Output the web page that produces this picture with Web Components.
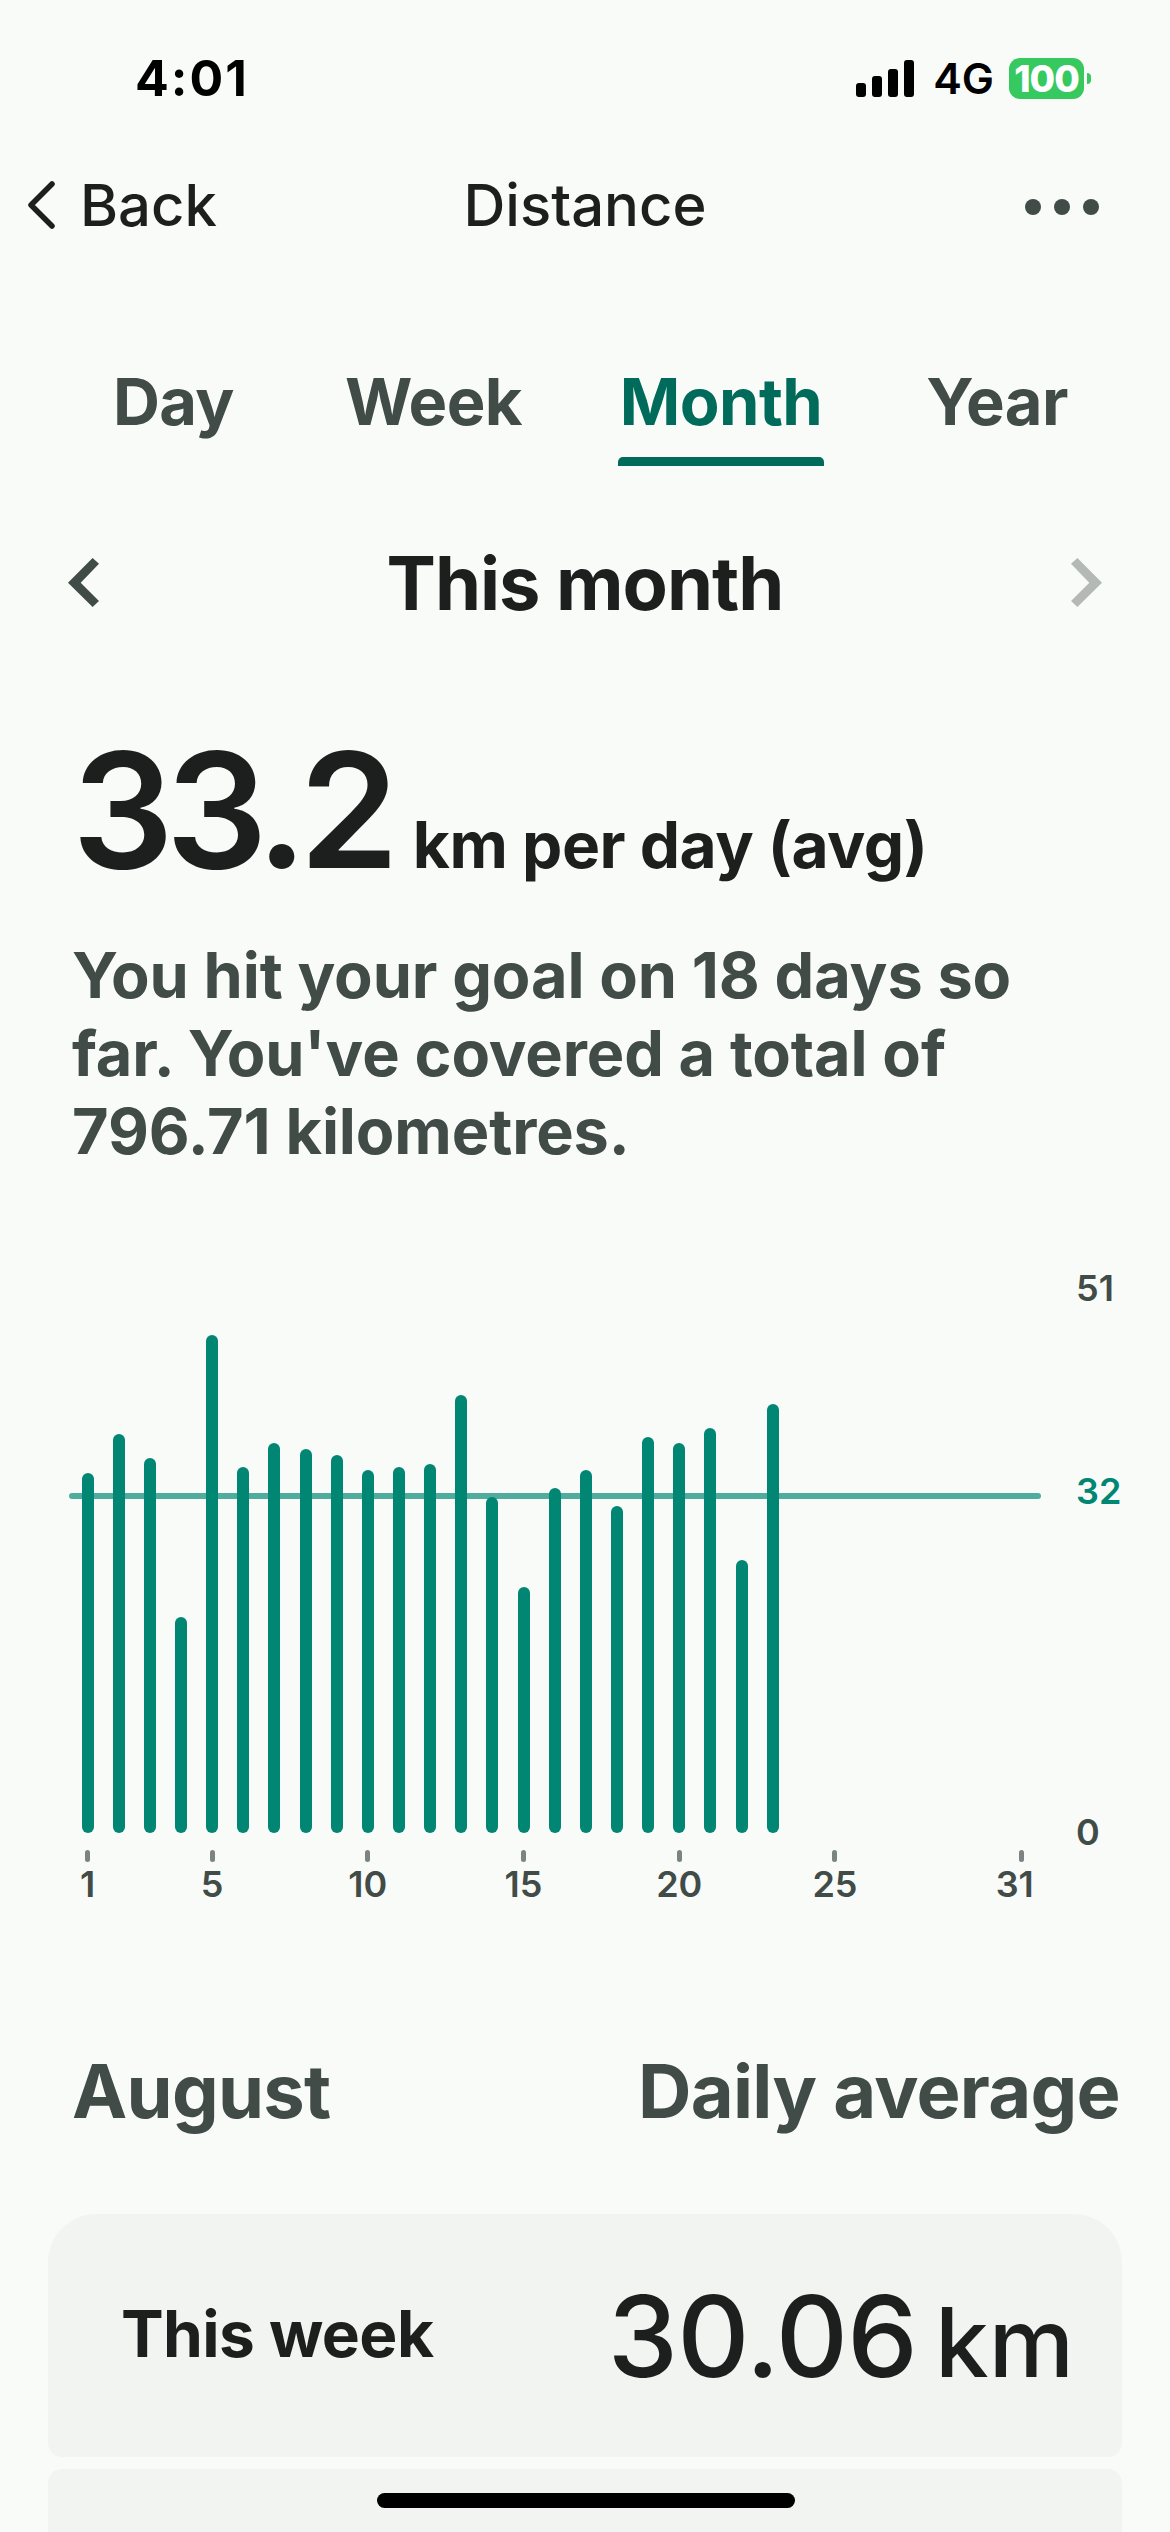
<!DOCTYPE html>
<html lang="en">
<head>
<meta charset="UTF-8">
<title>Distance</title>
<style>
    html,body{
        margin:0;
        height:2532px;
        overflow:hidden;
        background:#f9fbf9;
    }
    body{
        font-family:Inter,"Noto Sans",sans-serif;
        color:#1c1f1e;
        --grey-text:#414b47;
        --teal:#006b5b;
        --bar:#018673;
        position:relative;
    }
</style>
</head>
<body>
    <status-bar time="4:01"></status-bar>
    <nav-bar>Distance</nav-bar>
    <period-tabs>
        <period-tab>Day</period-tab>
        <period-tab>Week</period-tab>
        <period-tab active>Month</period-tab>
        <period-tab>Year</period-tab>
    </period-tabs>
    <period-nav>This month</period-nav>
    <stat-summary>
        <span slot="value">33.2</span>
        <span slot="unit">km per day (avg)</span>
        You hit your goal on 18 days so far. You've covered a total of 796.71 kilometres.
    </stat-summary>
    <distance-chart></distance-chart>
    <section-head>
        <span slot="left">August</span>
        <span slot="right">Daily average</span>
    </section-head>
    <summary-row top label="This week" value="30.06" unit="km"></summary-row>
    <summary-row></summary-row>
    <home-indicator></home-indicator>

    <template id="status-tpl">
        <style>
            :host{display:flex;height:156px;align-items:center;padding:0 79px 0 135px;box-sizing:border-box;color:#000;}
            .time{font-size:50px;font-weight:700;letter-spacing:2px;margin-right:auto;line-height:1;}
            .signal{display:flex;align-items:flex-end;gap:6px;height:37px;margin-right:19px;}
            .signal i{display:block;width:10px;background:#000;border-radius:3px;}
            .net{font-size:43px;font-weight:600;line-height:1;margin-right:15px;}
            .battery{display:flex;align-items:center;gap:3px;}
            .cell{width:75px;height:41px;border-radius:11px;background:#36c95f;color:#fff;font-size:37px;font-weight:800;display:flex;align-items:center;justify-content:center;line-height:1;letter-spacing:-1px;}
            .nub{width:4px;height:11px;background:#36c95f;border-radius:0 6px 6px 0;}
        </style>
        <span class="time"></span>
        <div class="signal"><i style="height:14px"></i><i style="height:21px"></i><i style="height:28px"></i><i style="height:37px"></i></div>
        <span class="net">4G</span>
        <div class="battery"><div class="cell">100</div><div class="nub"></div></div>
    </template>

    <template id="nav-tpl">
        <style>
            :host{display:grid;grid-template-columns:1fr auto 1fr;align-items:center;height:98px;padding:0 26px;box-sizing:border-box;font-size:58px;font-weight:500;}
            .back{display:flex;align-items:center;gap:24px;}
            svg{display:block;}
            .more{justify-self:end;display:flex;gap:13px;margin:4px 45px 0 0;}
            .more i{display:block;width:16px;height:16px;border-radius:50%;background:var(--grey-text);}
        </style>
        <div class="back">
            <svg width="30" height="48" viewBox="0 0 30 48"><path d="M26 3 L5 24 L26 45" fill="none" stroke="#1c1f1e" stroke-width="5.5" stroke-linecap="round" stroke-linejoin="round"/></svg>
            <span>Back</span>
        </div>
        <slot></slot>
        <div class="more"><i></i><i></i><i></i></div>
    </template>

    <template id="tabs-tpl">
        <style>
            :host{display:flex;padding:109px 0 0 111px;gap:94px;}
            ::slotted(period-tab:nth-child(2)){margin-left:13px;}
            ::slotted(period-tab:nth-child(4)){margin-left:6px;}
        </style>
        <slot></slot>
    </template>

    <template id="tab-tpl">
        <style>
            :host{display:block;padding:0 2px 26px;font-size:65px;line-height:77px;font-weight:700;letter-spacing:-.6px;color:var(--grey-text);position:relative;}
            :host([active]){color:var(--teal);}
            :host([active])::after{content:"";position:absolute;left:0;right:0;bottom:0;height:9px;background:var(--teal);border-radius:5px 5px 0 0;}
        </style>
        <slot></slot>
    </template>

    <template id="pnav-tpl">
        <style>
            :host{display:flex;align-items:center;justify-content:space-between;height:90px;margin-top:72px;padding:0 68px;box-sizing:border-box;font-size:74px;font-weight:700;letter-spacing:-1px;}
            svg{display:block;}
        </style>
        <svg width="32" height="50" viewBox="0 0 32 50"><polygon points="24.6,0 31,5.7 12.7,24.7 31,43 24.6,49 0,24.7" fill="#414b47"/></svg>
        <span><slot></slot></span>
        <svg width="32" height="50" viewBox="0 0 32 50"><polygon points="7.4,0 1,5.7 19.3,24.7 1,43 7.4,49 32,24.7" fill="#b5b9b6"/></svg>
    </template>

    <template id="stat-tpl">
        <style>
            :host{display:block;padding:0 100px 0 72px;margin-top:97px;}
            .top{display:flex;align-items:baseline;gap:22px;line-height:170px;}
            .value{font-size:160px;font-weight:600;letter-spacing:-8px;}
            .unit{font-size:64px;font-weight:700;letter-spacing:-.5px;}
            .text{margin-top:6px;font-size:63px;line-height:78px;font-weight:700;letter-spacing:-.1px;color:var(--grey-text);}
        </style>
        <div class="top"><span class="value"><slot name="value"></slot></span><span class="unit"><slot name="unit"></slot></span></div>
        <div class="text"><slot></slot></div>
    </template>

    <template id="chart-tpl">
        <style>
            :host{display:block;position:relative;height:650px;margin-top:101px;font-size:36px;font-weight:600;color:var(--grey-text);}
            .cols{display:grid;grid-template-columns:repeat(31,31.15px);margin-left:72px;width:max-content;position:relative;}
            .bars{height:562px;align-items:end;}
            .bar{width:12px;justify-self:center;background:var(--bar);border-radius:6px;}
            .ticks{height:12px;margin-top:17px;}
            .tick{width:5px;height:12px;justify-self:center;background:#7b8480;border-radius:3px;}
            .labels{margin-top:2px;line-height:40px;}
            .labels span{justify-self:center;white-space:nowrap;}
            .labels .last{margin-right:14px;}
            .goal{position:absolute;left:69px;width:972px;top:222px;height:6px;border-radius:3px;background:#50ac9c;}
            .y{position:absolute;left:1076px;line-height:40px;}
        </style>
        <div class="goal"></div>
        <span class="y" style="top:-3px">51</span>
        <span class="y" style="top:200px;color:var(--bar)">32</span>
        <span class="y" style="top:541px">0</span>
        <div class="cols bars"></div>
        <div class="cols ticks"></div>
        <div class="cols labels"></div>
    </template>

    <template id="head-tpl">
        <style>
            :host{display:flex;justify-content:space-between;padding:0 50px 0 72px;margin-top:125px;font-size:74px;line-height:90px;font-weight:700;letter-spacing:-.7px;color:var(--grey-text);}
        </style>
        <slot name="left"></slot>
        <slot name="right"></slot>
    </template>

    <template id="row-tpl">
        <style>
            :host{display:flex;align-items:center;justify-content:space-between;box-sizing:border-box;height:66px;margin:12px 48px 0;padding:0 48px 0 73px;background:#f2f4f2;border-radius:14px 14px 0 0;}
            :host([top]){height:243px;border-radius:48px 48px 14px 14px;margin-top:78px;}
            .label{font-size:64px;font-weight:700;letter-spacing:-.6px;margin-bottom:5px;}
            .value{font-size:112px;font-weight:500;letter-spacing:-.8px;}
            .unit{font-size:96px;font-weight:500;margin-left:18px;}
        </style>
        <span class="label"></span>
        <span><span class="value"></span><span class="unit"></span></span>
    </template>

    <template id="home-tpl">
        <style>
            :host{position:absolute;left:377px;top:2493px;width:418px;height:15px;background:#000;border-radius:8px;}
        </style>
    </template>
</body>
<script>
    function attach(el, id){
        const shadow = el.attachShadow({mode:'open'});
        shadow.appendChild(document.getElementById(id).content.cloneNode(true));
        return shadow;
    }

    class StatusBar extends HTMLElement{
        constructor(){
            super();
            const shadow = attach(this,'status-tpl');
            shadow.querySelector('.time').textContent = this.getAttribute('time');
        }
    }
    class NavBar extends HTMLElement{
        constructor(){ super(); attach(this,'nav-tpl'); }
    }
    class PeriodTabs extends HTMLElement{
        constructor(){ super(); attach(this,'tabs-tpl'); }
    }
    class PeriodTab extends HTMLElement{
        constructor(){ super(); attach(this,'tab-tpl'); }
    }
    class PeriodNav extends HTMLElement{
        constructor(){ super(); attach(this,'pnav-tpl'); }
    }
    class StatSummary extends HTMLElement{
        constructor(){ super(); attach(this,'stat-tpl'); }
    }
    class SectionHead extends HTMLElement{
        constructor(){ super(); attach(this,'head-tpl'); }
    }
    class HomeIndicator extends HTMLElement{
        constructor(){ super(); attach(this,'home-tpl'); }
    }

    // bar heights in px, measured from the baseline at day 1..23
    const DAYS = [360,399,375,216,498,366,390,384,378,363,366,369,438,336,246,345,363,327,396,390,405,273,429];
    const TICKS = [1,5,10,15,20,25,31];

    class DistanceChart extends HTMLElement{
        constructor(){
            super();
            const shadow = attach(this,'chart-tpl');
            const bars = shadow.querySelector('.bars');
            DAYS.forEach((h,i)=>{
                const bar = document.createElement('div');
                bar.className = 'bar';
                bar.style.height = h+'px';
                bar.style.gridColumn = i+1;
                bar.style.gridRow = 1;
                bars.appendChild(bar);
            });
            const ticks = shadow.querySelector('.ticks');
            const labels = shadow.querySelector('.labels');
            TICKS.forEach(d=>{
                const tick = document.createElement('div');
                tick.className = 'tick';
                tick.style.gridColumn = d;
                ticks.appendChild(tick);
                const label = document.createElement('span');
                label.textContent = d;
                label.style.gridColumn = d;
                if(d===31) label.className = 'last';
                labels.appendChild(label);
            });
        }
    }

    class SummaryRow extends HTMLElement{
        constructor(){
            super();
            const shadow = attach(this,'row-tpl');
            shadow.querySelector('.label').textContent = this.getAttribute('label') || '';
            shadow.querySelector('.value').textContent = this.getAttribute('value') || '';
            shadow.querySelector('.unit').textContent = this.getAttribute('unit') || '';
        }
    }

    customElements.define('status-bar',StatusBar);
    customElements.define('nav-bar',NavBar);
    customElements.define('period-tabs',PeriodTabs);
    customElements.define('period-tab',PeriodTab);
    customElements.define('period-nav',PeriodNav);
    customElements.define('stat-summary',StatSummary);
    customElements.define('distance-chart',DistanceChart);
    customElements.define('section-head',SectionHead);
    customElements.define('summary-row',SummaryRow);
    customElements.define('home-indicator',HomeIndicator);
</script>
</html>
